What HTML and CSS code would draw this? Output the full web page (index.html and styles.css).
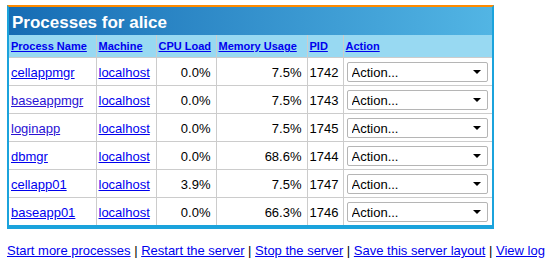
FILE: index.html
```html
<!DOCTYPE html>
<html lang="en">
<head>
    <meta charset="UTF-8">
    <title>Processes for alice</title>
    <link rel="stylesheet" href="styles.css">
</head>
<body>

<div class="panel">
    <h2 class="panel-title">Processes for alice</h2>
    <table class="proc-table">
        <colgroup>
            <col class="col-name">
            <col class="col-machine">
            <col class="col-cpu">
            <col class="col-mem">
            <col class="col-pid">
            <col class="col-action">
        </colgroup>
        <thead>
            <tr>
                <th><a href="#">Process Name</a></th>
                <th><a href="#">Machine</a></th>
                <th><a href="#">CPU Load</a></th>
                <th><a href="#">Memory Usage</a></th>
                <th><a href="#">PID</a></th>
                <th><a href="#">Action</a></th>
            </tr>
        </thead>
        <tbody>
            <tr>
                <td><a href="#">cellappmgr</a></td>
                <td><a href="#">localhost</a></td>
                <td class="num">0.0%</td>
                <td class="num">7.5%</td>
                <td>1742</td>
                <td><span class="action-select"><select><option>Action...</option></select></span></td>
            </tr>
            <tr>
                <td><a href="#" class="visited">baseappmgr</a></td>
                <td><a href="#">localhost</a></td>
                <td class="num">0.0%</td>
                <td class="num">7.5%</td>
                <td>1743</td>
                <td><span class="action-select"><select><option>Action...</option></select></span></td>
            </tr>
            <tr>
                <td><a href="#" class="visited">loginapp</a></td>
                <td><a href="#">localhost</a></td>
                <td class="num">0.0%</td>
                <td class="num">7.5%</td>
                <td>1745</td>
                <td><span class="action-select"><select><option>Action...</option></select></span></td>
            </tr>
            <tr>
                <td><a href="#">dbmgr</a></td>
                <td><a href="#">localhost</a></td>
                <td class="num">0.0%</td>
                <td class="num">68.6%</td>
                <td>1744</td>
                <td><span class="action-select"><select><option>Action...</option></select></span></td>
            </tr>
            <tr>
                <td><a href="#">cellapp01</a></td>
                <td><a href="#">localhost</a></td>
                <td class="num">3.9%</td>
                <td class="num">7.5%</td>
                <td>1747</td>
                <td><span class="action-select"><select><option>Action...</option></select></span></td>
            </tr>
            <tr>
                <td><a href="#">baseapp01</a></td>
                <td><a href="#">localhost</a></td>
                <td class="num">0.0%</td>
                <td class="num">66.3%</td>
                <td>1746</td>
                <td><span class="action-select"><select><option>Action...</option></select></span></td>
            </tr>
        </tbody>
    </table>
</div>

<p class="footer-links">
    <a href="#">Start more processes</a> |
    <a href="#">Restart the server</a> |
    <a href="#">Stop the server</a> |
    <a href="#">Save this server layout</a> |
    <a href="#">View log</a>
</p>

</body>
</html>
```

FILE: styles.css
```css
body {
    margin: 0;
    padding: 5px 7px;
    font-family: "Liberation Sans", Arial, sans-serif;
    font-size: 13px;
    color: #000;
    background-color: #fff;
}

a {
    color: #0000ee;
}

a.visited {
    color: #2a12d4;
}

.panel {
    width: 483px;
    border-top: 2px solid #ff8a00;
    border-left: 2px solid #1ba3dc;
    border-right: 2px solid #1ba3dc;
    border-bottom: 4px solid #1ba3dc;
}

.panel-title {
    margin: 0;
    height: 25px;
    line-height: 25px;
    padding: 3px 0 0 3px;
    font-size: 17px;
    font-weight: bold;
    color: #fff;
    background: linear-gradient(to right, #166cb4, #52b5e4);
}

.proc-table {
    width: 100%;
    border-collapse: collapse;
    table-layout: fixed;
}

.col-name { width: 87px; }
.col-machine { width: 60px; }
.col-cpu { width: 60px; }
.col-mem { width: 91px; }
.col-pid { width: 36px; }
.col-action { width: 149px; }

.proc-table th {
    height: 22px;
    padding: 0 2px;
    background-color: #98d9f2;
    border-left: 1px solid #ccc;
    border-bottom: 1px solid #ccc;
    font-size: 11px;
    font-weight: bold;
    text-align: left;
    white-space: nowrap;
}

.proc-table th:first-child,
.proc-table td:first-child {
    border-left: none;
}

.proc-table td {
    height: 26px;
    padding: 1px 2px 0;
    border-left: 1px solid #ccc;
    border-top: 1px solid #ccc;
    white-space: nowrap;
}

.proc-table thead + tbody tr:first-child td {
    border-top: none;
}

.proc-table td.num {
    text-align: right;
    padding-right: 5px;
}

.action-select {
    position: relative;
    display: block;
    width: 141px;
    margin-left: 1px;
}

.action-select select {
    appearance: none;
    -webkit-appearance: none;
    display: block;
    width: 141px;
    height: 20px;
    padding: 0 0 0 4px;
    border: 1px solid #b5b5b5;
    border-radius: 2px;
    background-color: #fff;
    font-family: "Liberation Sans", Arial, sans-serif;
    font-size: 13px;
    color: #000;
}

.action-select::after {
    content: "";
    position: absolute;
    right: 7px;
    top: 8px;
    border-left: 4px solid transparent;
    border-right: 4px solid transparent;
    border-top: 4px solid #000;
    pointer-events: none;
}

.footer-links {
    margin: 14px 0 0;
    white-space: nowrap;
}
```
